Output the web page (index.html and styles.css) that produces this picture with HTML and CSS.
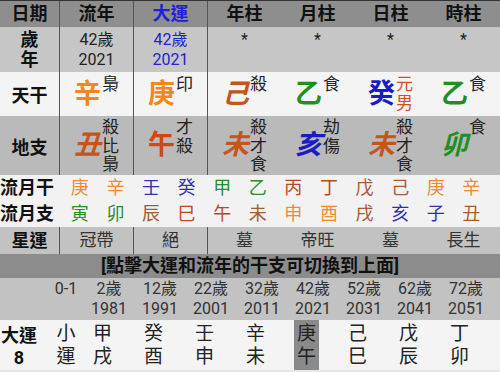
FILE: index.html
```html
<!DOCTYPE html>
<html>
<head>
<meta charset="utf-8">
<link rel="stylesheet" href="styles.css">
</head>
<body>
<div class="top">
  <div class="row hdr">
    <div class="c sep">日期</div>
    <div class="c sep">流年</div>
    <div class="c sep blue">大運</div>
    <div class="c">年柱</div>
    <div class="c">月柱</div>
    <div class="c">日柱</div>
    <div class="c">時柱</div>
  </div>
  <div class="row yr">
    <div class="c sep lbl">歲<br>年</div>
    <div class="c sep">42歲<br>2021</div>
    <div class="c sep blue">42歲<br>2021</div>
    <div class="c">*</div>
    <div class="c">*</div>
    <div class="c">*</div>
    <div class="c">*</div>
  </div>
  <div class="row gan">
    <div class="c sep lbl">天干</div>
    <div class="c sep"><span class="big metal">辛</span><span class="note">梟</span></div>
    <div class="c sep"><span class="big metal">庚</span><span class="note">印</span></div>
    <div class="c"><span class="big earth it">己</span><span class="note">殺</span></div>
    <div class="c"><span class="big wood">乙</span><span class="note">食</span></div>
    <div class="c"><span class="big water">癸</span><span class="note self">元<br>男</span></div>
    <div class="c"><span class="big wood">乙</span><span class="note">食</span></div>
  </div>
  <div class="row zhi">
    <div class="c sep lbl">地支</div>
    <div class="c sep"><span class="big earth it">丑</span><span class="note">殺<br>比<br>梟</span></div>
    <div class="c sep"><span class="big fire">午</span><span class="note">才<br>殺</span></div>
    <div class="c"><span class="big earth it">未</span><span class="note">殺<br>才<br>食</span></div>
    <div class="c"><span class="big water it">亥</span><span class="note">劫<br>傷</span></div>
    <div class="c"><span class="big earth it">未</span><span class="note">殺<br>才<br>食</span></div>
    <div class="c"><span class="big wood it">卯</span><span class="note">食</span></div>
  </div>
  <div class="ly">
    <div class="lylbl">流月干</div>
    <div class="m-metal">庚</div><div class="m-metal">辛</div>
    <div class="m-water">壬</div><div class="m-water">癸</div>
    <div class="m-wood">甲</div><div class="m-wood">乙</div>
    <div class="m-fire">丙</div><div class="m-fire">丁</div>
    <div class="m-earth">戊</div><div class="m-earth">己</div>
    <div class="m-metal">庚</div><div class="m-metal">辛</div>
  </div>
  <div class="ly">
    <div class="lylbl">流月支</div>
    <div class="m-wood">寅</div><div class="m-wood">卯</div>
    <div class="m-earth">辰</div><div class="m-fire">巳</div>
    <div class="m-fire">午</div><div class="m-earth">未</div>
    <div class="m-metal">申</div><div class="m-metal">酉</div>
    <div class="m-earth">戌</div><div class="m-water">亥</div>
    <div class="m-water">子</div><div class="m-earth">丑</div>
  </div>
  <div class="row xy">
    <div class="c sep lbl">星運</div>
    <div class="c sep">冠帶</div>
    <div class="c sep">絕</div>
    <div class="c">墓</div>
    <div class="c">帝旺</div>
    <div class="c">墓</div>
    <div class="c">長生</div>
  </div>
</div>
<div class="banner">[點擊大運和流年的干支可切換到上面]</div>
<div class="dy ages">
  <div></div>
  <div class="first"><div class="agebox">0-1</div></div>
  <div><div class="agebox">2歲<br>1981</div></div>
  <div><div class="agebox">12歲<br>1991</div></div>
  <div><div class="agebox">22歲<br>2001</div></div>
  <div><div class="agebox">32歲<br>2011</div></div>
  <div><div class="agebox">42歲<br>2021</div></div>
  <div><div class="agebox">52歲<br>2031</div></div>
  <div><div class="agebox">62歲<br>2041</div></div>
  <div><div class="agebox">72歲<br>2051</div></div>
</div>
<div class="dy gz">
  <div class="dylbl">大運<br>8</div>
  <div class="first"><div class="gzbox">小<br>運</div></div>
  <div><div class="gzbox">甲<br>戌</div></div>
  <div><div class="gzbox">癸<br>酉</div></div>
  <div><div class="gzbox">壬<br>申</div></div>
  <div><div class="gzbox">辛<br>未</div></div>
  <div><div class="gzbox on">庚<br>午</div></div>
  <div><div class="gzbox">己<br>巳</div></div>
  <div><div class="gzbox">戊<br>辰</div></div>
  <div><div class="gzbox">丁<br>卯</div></div>
</div>
</body>
</html>
```
FILE: styles.css
```css
* { box-sizing: border-box; margin: 0; padding: 0; }
html, body { width: 500px; height: 372px; overflow: hidden; }
body {
  background: #e6e6e6;
  font-family: Roboto, "Noto Sans CJK TC", sans-serif;
  color: #222;
}
.row {
  display: grid;
  grid-template-columns: 60px 74px 74px repeat(4, 1fr);
}
.c { text-align: center; }
.sep { border-right: 1px solid #555; }
.blue { color: #2323cc; }

.hdr {
  height: 27px;
  background: #8e8e8e;
  border-top: 1px solid #333;
  font-size: 18px;
  font-weight: bold;
  line-height: 26px;
  color: #111;
}
.hdr .blue { color: #2020d8; }

.yr {
  height: 45px;
  background: #c6c6c6;
  font-size: 16px;
  line-height: 20px;
}
.yr .c { padding-top: 3px; }
.yr .lbl { font-size: 18px; font-weight: bold; color: #111; }

.lbl { font-size: 18px; font-weight: bold; color: #111; }

.gan { height: 44px; background: #f4f4f4; }
.gan .c, .zhi .c {
  display: flex;
  justify-content: center;
  align-items: flex-start;
}
.gan .lbl, .zhi .lbl { align-items: center; }
.big { font-size: 27px; font-weight: bold; }
.gan .big { line-height: 44px; }
.zhi .big { line-height: 59px; }
.note {
  font-size: 17px;
  line-height: 19px;
  margin-top: 3px;
  margin-left: 1px;
  color: #222;
  text-align: center;
}
.zhi .note { margin-top: 2px; line-height: 18.5px; }
.self { color: #d2501c; }
.it { font-style: italic; }

.zhi { height: 59px; background: #bababa; }

.metal { color: #f2871e; }
.earth { color: #c4561c; }
.fire { color: #cf4712; }
.wood { color: #1f8f1f; }
.water { color: #1c1cc4; }

.ly {
  display: grid;
  grid-template-columns: 62px repeat(12, 35.6px);
  height: 26px;
  background: #f2f2f2;
  font-size: 18px;
  line-height: 26px;
  text-align: center;
}
.lylbl { text-align: left; font-weight: bold; color: #111; }
.m-metal { color: #ef8a30; }
.m-water { color: #2f2fb0; }
.m-wood { color: #2a8c2a; }
.m-fire { color: #b84a22; }
.m-earth { color: #a45c36; }

.xy {
  height: 27px;
  background: #c2c2c2;
  font-size: 17px;
  line-height: 27px;
  color: #333;
}

.banner {
  height: 24px;
  background: #8c8c8c;
  font-size: 18px;
  font-weight: bold;
  line-height: 24px;
  text-align: center;
  color: #111;
}

.dy {
  display: grid;
  grid-template-columns: 42px 48px repeat(8, 51px);
}
.ages {
  height: 42px;
  background: #c2c2c2;
  font-size: 16px;
  line-height: 20px;
  color: #333;
  padding-top: 1px;
}
.agebox { width: 38px; text-align: center; }
.first { display: flex; justify-content: center; }
.gz {
  height: 50px;
  background: #f4f4f4;
  font-size: 19px;
  line-height: 23px;
  color: #222;
}
.dylbl {
  width: 38px;
  font-size: 18px;
  font-weight: bold;
  line-height: 22px;
  text-align: center;
  padding-top: 5px;
  color: #111;
}
.gzbox {
  width: 25px;
  height: 50px;
  text-align: center;
  padding-top: 2px;
}
.gzbox.on { background: #8a8a8a; }
```
